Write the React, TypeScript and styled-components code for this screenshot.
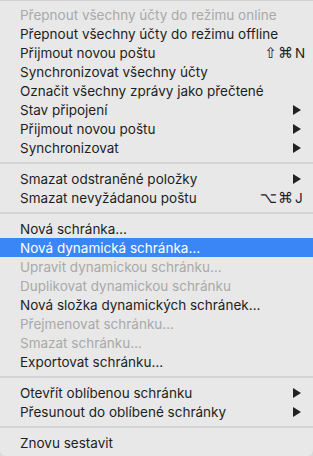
import React from "react";
import styled, { createGlobalStyle } from "styled-components";

type Item =
    | { kind: "sep" }
    | {
          kind: "item";
          label: string;
          disabled?: boolean;
          active?: boolean;
          submenu?: boolean;
          mods?: string;
          keyChar?: string;
      };

const items: Item[] = [
    { kind: "item", label: "Přepnout všechny účty do režimu online", disabled: true },
    { kind: "item", label: "Přepnout všechny účty do režimu offline" },
    { kind: "item", label: "Přijmout novou poštu", mods: "⇧⌘", keyChar: "N" },
    { kind: "item", label: "Synchronizovat všechny účty" },
    { kind: "item", label: "Označit všechny zprávy jako přečtené" },
    { kind: "item", label: "Stav připojení", submenu: true },
    { kind: "item", label: "Přijmout novou poštu", submenu: true },
    { kind: "item", label: "Synchronizovat", submenu: true },
    { kind: "sep" },
    { kind: "item", label: "Smazat odstraněné položky", submenu: true },
    { kind: "item", label: "Smazat nevyžádanou poštu", mods: "⌥⌘", keyChar: "J" },
    { kind: "sep" },
    { kind: "item", label: "Nová schránka…" },
    { kind: "item", label: "Nová dynamická schránka…", active: true },
    { kind: "item", label: "Upravit dynamickou schránku…", disabled: true },
    { kind: "item", label: "Duplikovat dynamickou schránku", disabled: true },
    { kind: "item", label: "Nová složka dynamických schránek…" },
    { kind: "item", label: "Přejmenovat schránku…", disabled: true },
    { kind: "item", label: "Smazat schránku…", disabled: true },
    { kind: "item", label: "Exportovat schránku…" },
    { kind: "sep" },
    { kind: "item", label: "Otevřít oblíbenou schránku", submenu: true },
    { kind: "item", label: "Přesunout do oblíbené schránky", submenu: true },
    { kind: "sep" },
    { kind: "item", label: "Znovu sestavit" },
];

const GlobalStyle = createGlobalStyle`
    html, body {
        margin: 0;
        padding: 0;
        background: #d9d9d9;
    }
    body {
        font-family: Inter, "Noto Sans", "Liberation Sans", sans-serif;
        -webkit-font-smoothing: antialiased;
    }
`;

const Menu = styled.div`
    width: 313px;
    box-sizing: border-box;
    padding: 4px 0;
    background: #e8e8e8;
    border-top: 1px solid #d2d2d2;
    border-radius: 0 0 6px 6px;
    display: flex;
    flex-direction: column;
`;

const Row = styled.div<{ $disabled?: boolean; $active?: boolean }>`
    height: 19px;
    display: flex;
    align-items: center;
    padding: 0 12px 0 20px;
    font-size: 13.5px;
    color: ${(p) => (p.$active ? "#ffffff" : p.$disabled ? "#a9a9a9" : "#1e1e1e")};
    background: ${(p) => (p.$active ? "#3b86f7" : "transparent")};
    white-space: nowrap;
`;

const Label = styled.span`
    flex: 1;
`;

const Separator = styled.div`
    height: 12px;
    display: flex;
    align-items: center;
    &::after {
        content: "";
        flex: 1;
        height: 2px;
        background: #d3d3d3;
    }
`;

const Shortcut = styled.span`
    display: flex;
    align-items: center;
    margin-right: -12px;
`;

const Mods = styled.span`
    font-family: "DejaVu Sans", sans-serif;
    font-size: 15px;
    letter-spacing: 1px;
    text-align: right;
    margin-right: 1px;
`;

const KeyChar = styled.span`
    width: 18px;
    text-align: left;
`;

const Arrow = styled.svg`
    width: 8px;
    height: 10px;
    flex: none;
`;

export default function App() {
    return (
        <>
            <GlobalStyle />
            <Menu>
                {items.map((it, i) =>
                    it.kind === "sep" ? (
                        <Separator key={i} />
                    ) : (
                        <Row key={i} $disabled={it.disabled} $active={it.active}>
                            <Label>{it.label}</Label>
                            {it.mods && (
                                <Shortcut>
                                    <Mods>{it.mods}</Mods>
                                    <KeyChar>{it.keyChar}</KeyChar>
                                </Shortcut>
                            )}
                            {it.submenu && (
                                <Arrow viewBox="0 0 8 10">
                                    <path d="M0 0 L8 5 L0 10 Z" fill="#222" />
                                </Arrow>
                            )}
                        </Row>
                    )
                )}
            </Menu>
        </>
    );
}
